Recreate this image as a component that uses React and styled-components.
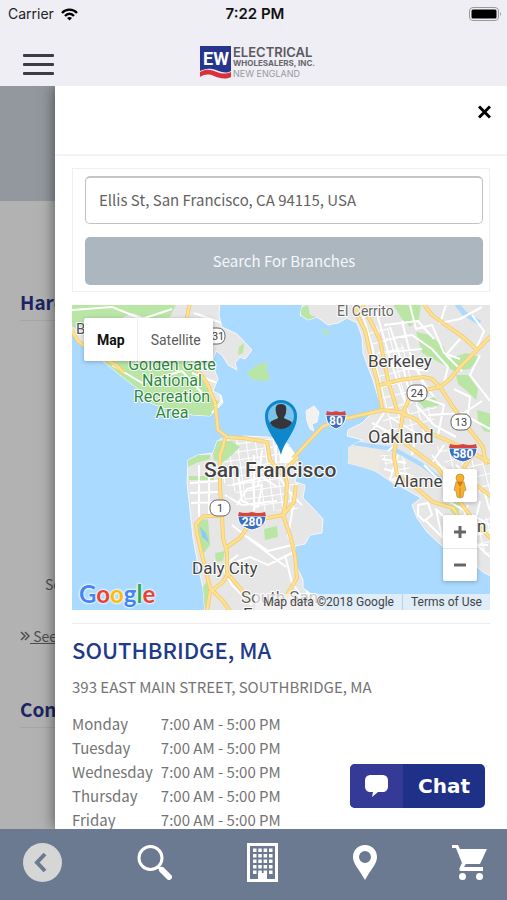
import styled, { createGlobalStyle } from 'styled-components';

const GlobalStyle = createGlobalStyle`
  *, *::before, *::after {
    box-sizing: border-box;
  }

  body {
    margin: 0;
    font-family: 'Noto Sans CJK SC', 'Open Sans', sans-serif;
    font-size: 15px;
    line-height: 24px;
    color: #747474;
  }

  h2, p {
    margin: 0;
  }

  button {
    border: 0;
    padding: 0;
    background: none;
    font: inherit;
    color: inherit;
    cursor: pointer;
  }

  svg {
    display: block;
  }
`;

const Screen = styled.div`
  display: flex;
  flex-direction: column;
  height: 100vh;
  background-color: #efeef4;
`;

const StatusBar = styled.div`
  display: grid;
  grid-template-columns: 1fr auto 1fr;
  align-items: center;
  height: 28px;
  padding: 0 5px 0 8px;
  font-family: Inter, sans-serif;
  font-size: 14px;
  color: #222;
`;

const Carrier = styled.div`
  display: flex;
  align-items: center;
  gap: 7px;
`;

const Time = styled.strong`
  font-size: 15px;
  font-weight: 600;
  color: #111;
`;

const Battery = styled.div`
  justify-self: end;
`;

const TopBar = styled.header`
  display: grid;
  grid-template-columns: 1fr auto 1fr;
  align-items: center;
  height: 58px;
  padding: 0 15px 0 23px;
`;

const MenuButton = styled.button`
  display: flex;
  flex-direction: column;
  gap: 6px;
  width: 31px;
  margin-top: 14px;

  span {
    height: 3px;
    width: 100%;
    border-radius: 1px;
    background-color: #3d3b43;
  }
`;

const Logo = styled.a`
  display: flex;
  gap: 2px;
  margin-top: 10px;
  text-decoration: none;
`;

const LogoWords = styled.div`
  display: flex;
  flex-direction: column;
  font-family: Inter, sans-serif;
  white-space: nowrap;
`;

const LogoLine = styled.span`
  font-size: ${(props) => props.$size}px;
  font-weight: ${(props) => props.$weight};
  line-height: ${(props) => props.$line}px;
  color: ${(props) => props.$color};
`;

const Main = styled.main`
  position: relative;
  flex: 1;
  min-height: 0;
  overflow: hidden;
  background-color: #b2b2b2;
`;

const Hero = styled.div`
  height: 115px;
  background-color: #93989e;
`;

const Underlay = styled.div`
  display: flex;
  flex-direction: column;
  padding: 87px 20px 0;
  color: #4e4e52;
`;

const UnderlayHeading = styled.h2`
  padding-bottom: 4px;
  border-bottom: 1px solid #a6a6a6;
  font-size: 19px;
  font-weight: 700;
  line-height: 28px;
  color: #1c2562;
`;

const UnderlayText = styled.p`
  padding: 251px 0 28px 25px;
  font-size: 14px;
`;

const UnderlayLink = styled.a`
  display: flex;
  align-items: center;
  margin-bottom: 47px;
  font-size: 14px;
  color: inherit;
`;

const Drawer = styled.aside`
  position: absolute;
  top: 0;
  right: 0;
  bottom: 0;
  left: 55px;
  overflow: hidden;
  background-color: #fff;
  box-shadow: 0 0 14px rgba(0, 0, 0, 0.55);
`;

const DrawerHeader = styled.div`
  display: flex;
  justify-content: flex-end;
  align-items: flex-start;
  height: 70px;
  padding: 19px 16px;
  border-bottom: 2px solid #f3f3f3;
`;

const DrawerBody = styled.div`
  padding: 12px 17px 0;
`;

const SearchForm = styled.form`
  display: flex;
  flex-direction: column;
  gap: 13px;
  padding: 7px 6px 6px 12px;
  margin-bottom: 13px;
  border: 1px solid #efefef;
`;

const AddressInput = styled.input`
  height: 48px;
  width: 100%;
  padding: 0 13px 2px;
  border: 1px solid #c2c2c2;
  border-top: 2px solid #c6c6c6;
  border-radius: 5px;
  background-color: #fff;
  font: inherit;
  color: #636363;
`;

const SearchButton = styled.button`
  height: 48px;
  border-radius: 5px;
  background-color: #abb6bf;
  color: #f5f7fb;
`;

const MapFrame = styled.section`
  position: relative;
  height: 305px;
  overflow: hidden;
  background-color: #aadaff;
  font-family: Roboto, sans-serif;

  > svg {
    width: 100%;
    height: 100%;
  }
`;

const MapTypes = styled.div`
  position: absolute;
  top: 13px;
  left: 12px;
  display: flex;
  height: 43px;
  border-radius: 2px;
  background-color: #fff;
  box-shadow: 0 1px 4px rgba(0, 0, 0, 0.25);
`;

const MapType = styled.button`
  padding: 0 12px 0 13px;
  font-size: 14px;
  font-weight: ${(props) => (props.$active ? 700 : 400)};
  color: ${(props) => (props.$active ? '#111' : '#5c5c5c')};

  & + & {
    border-left: 1px solid #eee;
  }
`;

const MapControls = styled.div`
  position: absolute;
  right: 13px;
  bottom: 29px;
  display: flex;
  flex-direction: column;
  gap: 13px;
`;

const ControlGroup = styled.div`
  display: flex;
  flex-direction: column;
  width: 34px;
  border-radius: 2px;
  background-color: #fff;
  box-shadow: 0 1px 4px rgba(0, 0, 0, 0.25);
`;

const ControlButton = styled.button`
  display: flex;
  align-items: center;
  justify-content: center;
  height: 33px;

  & + & {
    border-top: 1px solid #e8e8e8;
  }
`;

const Google = styled.a`
  position: absolute;
  left: 7px;
  bottom: 2px;
  font-family: Lato, sans-serif;
  font-size: 24px;
  font-weight: 700;
  line-height: 28px;
  text-decoration: none;
  text-shadow: 0 0 2px #fff, 0 0 2px #fff, 0 0 3px #fff;
`;

const Letter = styled.span`
  color: ${(props) => props.$color};
`;

const Attribution = styled.div`
  position: absolute;
  right: 0;
  bottom: 0;
  display: flex;
  font-size: 12px;
  line-height: 16px;
  color: #444;
  background-color: rgba(245, 245, 245, 0.7);

  > * {
    padding: 0 8px;
    color: inherit;
    text-decoration: none;
  }

  > * + * {
    border-left: 1px solid #b9d3e6;
  }
`;

const Branch = styled.section`
  margin-top: 13px;
  padding-top: 11px;
  border-top: 1px solid #ececec;
`;

const BranchName = styled.h2`
  font-size: 22px;
  font-weight: 500;
  line-height: 28px;
  color: #213a8a;
`;

const Address = styled.p`
  margin: 12px 0 13px;
`;

const Hours = styled.table`
  border-collapse: collapse;

  th, td {
    height: 24px;
    padding: 0 8px 0 0;
    font-weight: 400;
    text-align: left;
    white-space: nowrap;
  }
`;

const ChatButton = styled.button`
  position: absolute;
  right: 22px;
  bottom: 21px;
  display: flex;
  align-items: stretch;
  height: 44px;
  border-radius: 5px;
  overflow: hidden;
  background-color: #1f3088;
  color: #fff;
  font-family: 'DejaVu Sans', Verdana, sans-serif;
  font-size: 20px;
  font-weight: 700;
`;

const ChatIcon = styled.span`
  display: flex;
  align-items: center;
  padding: 0 14px;
  background-color: #353a96;
`;

const ChatLabel = styled.span`
  display: flex;
  align-items: center;
  padding: 0 15px;
`;

const BottomNav = styled.nav`
  display: flex;
  justify-content: space-between;
  align-items: center;
  height: 71px;
  padding: 0 20px 4px 23px;
  background-color: #6b7a91;
  color: #fff;
`;

const schedule = [
  ['Monday', '7:00 AM - 5:00 PM'],
  ['Tuesday', '7:00 AM - 5:00 PM'],
  ['Wednesday', '7:00 AM - 5:00 PM'],
  ['Thursday', '7:00 AM - 5:00 PM'],
  ['Friday', '7:00 AM - 5:00 PM'],
];

const googleLetters = [
  ['G', '#4285f4'],
  ['o', '#ea4335'],
  ['o', '#fbbc05'],
  ['g', '#4285f4'],
  ['l', '#34a853'],
  ['e', '#ea4335'],
];

// Coastlines
const marin =
  'M-2 -2H148L147 10L150 22L165 29L180 45L173 54L168 52L163 58L165 65L156 60L150 50L144 46L140 58L146 74L141 86L149 90L151 98L138 111L121 110L101 106L78 98L65 83L48 70L31 56L10 38L1 26L-2 24Z';
const sanFrancisco =
  'M116 155L126 150L141 148L145 136L151 133L160 134L171 131L195 132L205 134L216 139L225 152L226 165L223 177L233 180L231 193L240 202L251 214L250 228L238 230L233 239L223 241L224 260L231 275L231 283L238 288L251 294V307H133L131 283L126 260L121 233L115 177Z';
const eastBay =
  'M231 -2L228 10L236 15L245 12L256 20L266 18L275 13L285 18L290 32L291 48L296 62L301 75L306 92L310 103L298 110L290 118L276 125L275 131L291 135L280 140L276 158L295 163L305 167L321 178L335 185L349 193L340 200L345 213L355 227L371 242L405 262L411 267L420 272V-2Z';

const parks = [
  'M-2 -2H105L98 12L78 14L60 8L40 18L20 20L8 26L-2 20Z',
  'M31 56L48 70L65 83L78 98L101 106L121 110L138 111L150 98L140 93L132 78L125 62L118 50H40Z',
  'M176 67L185 60L194 57L195 66L198 75L188 76L178 73Z',
  'M141 148L145 136L160 136L168 142L160 150L150 158L142 155Z',
  'M116 155L126 150L138 150L138 154L124 158L116 162Z',
  'M117 171H142V175H117Z',
  'M124 216L136 214L138 240L132 248L126 238Z',
  'M130 283L136 275L139 290L135 304H132Z',
  'M192 224L205 221L206 232L193 235Z',
  'M143 248L153 246L151 256L144 257Z',
  'M320 -2H349L347 14L338 22L330 14Z',
  'M344 27L358 30L372 42L376 54L394 48L407 52L398 64L382 66L368 58L350 48Z',
  'M384 70L396 70L406 84L404 95L395 86L386 79Z',
  'M405 105L420 109V128L412 126L406 116Z',
  'M228 3L236 0L238 10L245 12L236 15L229 10Z',
  'M283 52L289 55L291 61L286 60Z',
  'M346 96L362 92L368 100L352 103Z',
  'M380 198L388 197L386 212L378 206Z',
];

const islandParks = [
  'M176 67L185 60L194 57L195 66L198 75L188 76L178 73Z',
  'M251 24L256 26L257 31L252 28Z',
  'M167 42L172 38L171 48L166 50Z',
];

const minorRoads = [
  'M0 5L40 2L70 14L100 4',
  'M118 30L138 14M122 8L150 18',
  'M40 60L70 78L110 66L130 88',
  'M120 68L145 78L150 96L140 108',
  'M118 178L146 176M118 188L146 187M119 198L142 197M127 160V212M137 160V212',
  'M160 180L190 172L205 182M165 160L170 196L186 202L190 180L175 184L165 200',
  'M153 190L170 200L205 196M176 232L196 246L220 240M160 220L180 236L214 262',
  'M150 262L178 252L196 260L220 248M166 250L150 262L160 280L180 300',
  'M182 150V206M190 145L186 180M204 140V168L220 190L230 200',
  'M225 180L216 230L230 268L236 290M213 250L220 278L238 302',
  'M290 8L300 40L308 88M304 6L320 60L334 100M312 20L346 16L362 34',
  'M314 34L340 30L360 44L376 62L372 78M306 48L350 44M310 60L356 66',
  'M318 22L330 58L338 90M330 16L340 56L352 78L362 92',
  'M338 0L344 24L360 20L372 48L388 54M374 0L368 18L388 14L410 2',
  'M388 34L374 50L390 66M408 50L398 70L418 96M400 10L412 26L404 44',
  'M318 112L344 128L340 150M300 118L330 134L316 146M312 108L300 126',
  'M350 92L372 100L366 130M356 110L392 108L410 96M344 100L362 120L384 132',
  'M382 84L398 92L396 112L418 124M372 140L360 158L388 170',
  'M310 154L334 158M312 164L338 170M326 150L318 174L346 184',
  'M352 160L370 178L394 190M360 150L380 176L376 196L418 220M384 160L412 186L418 206',
  'M346 200L356 198L360 210L352 216L346 210ZM354 216L370 232L364 204L378 218',
  'M396 200L388 224L418 252M408 196L400 230L418 228M392 240L416 240',
];

const highways = [
  'M0 26L6 36L22 48L44 60L52 68M118 -2L115 12L120 40L126 66L135 78L143 98L146 125L155 132L171 133L195 137L198 155L211 170',
  'M153 133L151 142L148 150V183L150 210L151 233L155 247V270L151 277L138 287L135 306',
  'M150 211L132 211L124 219L125 228L130 250L138 283L151 296L158 306',
  'M211 210L195 213L182 214L175 223L168 233L155 242M155 268L168 283L178 298',
  'M226 152L212 166L215 178L214 196L211 210M224 180L222 197L211 210L218 230L223 250L225 273L215 290L196 300',
  'M221 153L250 122L263 116L311 105L328 107L345 115L358 128L381 138L408 152L420 158',
  'M283 -2L286 12L293 25L298 48L305 75L310 103M290 0L298 15L308 35L316 75L325 105',
  'M308 80L328 75L351 72L360 74L368 82L378 74L388 62L405 45L420 30',
  'M368 82L381 102L398 125L411 142L414 160M351 -2L360 10L371 18L391 32L405 45M348 86L368 82',
  'M338 92L331 108L328 128L323 142L322 152L325 170L341 180L361 197L381 203L392 220',
  'M325 132L351 152L366 163L388 197L408 223L420 234M401 150L392 162L404 180L420 192',
];

const placeLabels = [
  { text: 'Bol', x: 4, y: 29, size: 15, color: '#555' },
  { text: 'El Cerrito', x: 265, y: 11, size: 14, color: '#666' },
  { text: 'Berkeley', x: 296, y: 62, size: 17 },
  { text: 'Oakland', x: 296, y: 138, size: 18 },
  { text: 'Alame', x: 322, y: 182, size: 17 },
  { text: 'n', x: 405, y: 227, size: 17 },
  { text: 'San Francisco', x: 132, y: 172, size: 21, weight: 500 },
  { text: 'Daly City', x: 120, y: 269, size: 17 },
  { text: 'South San', x: 169, y: 298, size: 17, color: '#666' },
  { text: 'F', x: 171, y: 315, size: 17 },
];

const parkLabel = ['Golden Gate', 'National', 'Recreation', 'Area'];

function RouteBadge({ x, y, children }) {
  return (
    <g>
      <rect x={x - 10} y={y - 8} width="20" height="16" rx="7" fill="#fff" stroke="#666" />
      <text x={x} y={y + 4} textAnchor="middle" fontSize="11" fill="#444">
        {children}
      </text>
    </g>
  );
}

function InterstateBadge({ x, y, width, children }) {
  const half = width / 2;
  return (
    <g transform={`translate(${x} ${y})`}>
      <path
        d={`M${-half} -4H${half}C${half} 4 ${half - 5} 8 0 10C${5 - half} 8 ${-half} 4 ${-half} -4Z`}
        fill="#3c6fc0"
        stroke="#fff"
      />
      <path
        d={`M${1 - half} -8Q${-half / 2} -6 0 -8Q${half / 2} -6 ${half - 1} -8L${half} -4H${-half}Z`}
        fill="#d8453e"
      />
      <text y="6" textAnchor="middle" fontSize="12" fontWeight="700" fill="#fff">
        {children}
      </text>
    </g>
  );
}

function MapArt() {
  return (
    <svg viewBox="0 0 418 305" preserveAspectRatio="xMidYMid slice" role="img" aria-label="Map">
      <defs>
        <clipPath id="land">
          <path d={`${marin}${sanFrancisco}${eastBay}`} />
        </clipPath>
        <clipPath id="city">
          <path d="M150 134H216L226 165V205L186 206L150 176Z" />
        </clipPath>
        <pattern id="streets" width="9" height="8" patternUnits="userSpaceOnUse" patternTransform="rotate(-8)">
          <path d="M0 0H9M0 0V8" stroke="#fff" strokeWidth="2" />
        </pattern>
        <pattern id="blocks" width="10" height="11" patternUnits="userSpaceOnUse" patternTransform="rotate(-14)">
          <path d="M0 0H10M0 0V11" stroke="#fff" strokeWidth="2" />
        </pattern>
      </defs>

      <g fill="#e6e6e6" stroke="#f7f7f7">
        <path d={marin} />
        <path d={sanFrancisco} />
        <path d={eastBay} />
        <path d="M234 106L242 101L247 107L245 117L240 119L242 126L238 124L235 116Z" fill="#f3f1ee" />
      </g>
      <path d="M276 142L291 138L312 148L305 167L276 158Z" fill="#ece8e2" />
      <g clipPath="url(#land)">
        <path d="M296 20L320 24L350 70L366 106L350 140L312 136L310 100Z" fill="url(#blocks)" />
        <path d="M362 140L418 160V190L390 184ZM398 215L418 212V252L404 244Z" fill="url(#blocks)" />
        <path d="M308 150L330 150L348 182L322 176Z" fill="url(#streets)" />
        <g clipPath="url(#city)">
          <path d="M150 134H226V206H150Z" fill="url(#streets)" />
        </g>
        {parks.map((d) => (
          <path key={d} d={d} fill="#b9e6a5" />
        ))}
        <path d="M206 136L222 145L225 158L208 158Z" fill="#fff" />
        <path d="M128 222L134 228L137 238L130 232Z" fill="#8fc9f5" />
        <path d="M275 137L300 141L322 144L350 160L376 180L398 194" fill="none" stroke="#aadaff" strokeWidth="4" />
        <path d="M384 -2L392 8L408 18" fill="none" stroke="#aadaff" strokeWidth="5" />
        <path d={minorRoads.join('')} fill="none" stroke="#fff" strokeWidth="2" strokeLinejoin="round" />
      </g>
      <path d={islandParks.join('')} fill="#b9e6a5" />
      <path d={highways.join('')} fill="none" stroke="#f2cb67" strokeWidth="4" strokeLinejoin="round" />
      <path d={highways.join('')} fill="none" stroke="#fde093" strokeWidth="2.500" strokeLinejoin="round" />

      <RouteBadge x={143} y={31}>
        131
      </RouteBadge>
      <RouteBadge x={345} y={88}>
        24
      </RouteBadge>
      <RouteBadge x={389} y={117}>
        13
      </RouteBadge>
      <RouteBadge x={148} y={203}>
        1
      </RouteBadge>
      <InterstateBadge x={264} y={114} width={20}>
        80
      </InterstateBadge>
      <InterstateBadge x={391} y={147} width={28}>
        580
      </InterstateBadge>
      <InterstateBadge x={180} y={215} width={28}>
        280
      </InterstateBadge>

      <g stroke="#fff" strokeWidth="2" strokeLinejoin="round" paintOrder="stroke">
        {parkLabel.map((line, i) => (
          <text key={line} x="100" y={65 + i * 16} textAnchor="middle" fontSize="16" fill="#2c8a3c">
            {line}
          </text>
        ))}
        {placeLabels.map((label) => (
          <text
            key={label.text}
            x={label.x}
            y={label.y}
            fontSize={label.size}
            fontWeight={label.weight || 400}
            fill={label.color || '#444'}
          >
            {label.text}
          </text>
        ))}
      </g>

      <path d="M209 150C206 136 193 126 193 111A16 16 0 0 1 225 111C225 126 212 136 209 150Z" fill="#0e87cb" />
      <circle cx="209" cy="111" r="13" fill="#7cc3ea" />
      <path
        d="M209 99C204 99 203 102 204 107C204 110 206 111 206 113C203 115 199 115 198 118A13 13 0 0 0 220 118C219 115 215 115 212 113C212 111 214 110 214 107C215 102 214 99 209 99Z"
        fill="#35353b"
      />
    </svg>
  );
}

function BranchMap() {
  return (
    <MapFrame>
      <MapArt />
      <MapTypes>
        <MapType type="button" $active>
          Map
        </MapType>
        <MapType type="button">Satellite</MapType>
      </MapTypes>
      <Google href="#google" aria-label="Google">
        {googleLetters.map(([letter, color], i) => (
          <Letter key={i} $color={color}>
            {letter}
          </Letter>
        ))}
      </Google>
      <Attribution>
        <span>Map data ©2018 Google</span>
        <a href="#terms">Terms of Use</a>
      </Attribution>
      <MapControls>
        <ControlGroup>
          <ControlButton type="button" aria-label="Street view">
            <svg width="16" height="26" viewBox="0 0 16 26">
              <path
                d="M4 9Q8 7 12 9L14 17L12 18L11 24Q8 26 5 24L4 18L2 17Z"
                fill="#f5b02e"
                stroke="#b98b4a"
                strokeWidth="0.7"
              />
              <path d="M5 9L8 14L11 9Z" fill="#e2711d" />
              <path d="M8 15V24" stroke="#c98a22" />
              <circle cx="8" cy="5" r="4" fill="#f5b02e" stroke="#c98a22" strokeWidth="0.7" />
            </svg>
          </ControlButton>
        </ControlGroup>
        <ControlGroup>
          <ControlButton type="button" aria-label="Zoom in">
            <svg width="14" height="14" viewBox="0 0 14 14" stroke="#666" strokeWidth="3">
              <path d="M1 7H13M7 1V13" />
            </svg>
          </ControlButton>
          <ControlButton type="button" aria-label="Zoom out">
            <svg width="14" height="14" viewBox="0 0 14 14" stroke="#666" strokeWidth="3">
              <path d="M1 7H13" />
            </svg>
          </ControlButton>
        </ControlGroup>
      </MapControls>
    </MapFrame>
  );
}

function Header() {
  return (
    <TopBar>
      <MenuButton type="button" aria-label="Menu">
        <span />
        <span />
        <span />
      </MenuButton>
      <Logo href="#home">
        <svg width="31" height="33" viewBox="0 0 31 33">
          <path d="M0 0H31V25C24 29 18 24 12 23C7 22 3 24 0 25Z" fill="#27358c" />
          <path d="M0 26C7 22 12 24 17 26C22 28 26 28 31 26V31C25 34 19 32 14 30C9 28 5 28 0 31Z" fill="#d9303c" />
          <text x="16" y="19" textAnchor="middle" fontFamily="Roboto" fontSize="18" fontWeight="700" fill="#fff">
            EW
          </text>
        </svg>
        <LogoWords>
          <LogoLine $size={13} $weight={600} $line={12} $color="#5a5a5e">
            ELECTRICAL
          </LogoLine>
          <LogoLine $size={8} $weight={700} $line={10} $color="#66666a">
            WHOLESALERS, INC.
          </LogoLine>
          <LogoLine $size={9} $weight={400} $line={11} $color="#9a9a9e">
            NEW ENGLAND
          </LogoLine>
        </LogoWords>
      </Logo>
    </TopBar>
  );
}

function Footer() {
  return (
    <BottomNav>
      <button type="button" aria-label="Back">
        <svg width="39" height="39" viewBox="0 0 39 39">
          <circle cx="19.5" cy="19.5" r="19.5" fill="#d6d6d6" />
          <path d="M22 11L14 19.500L22 28" fill="none" stroke="#6b7a91" strokeWidth="4" />
        </svg>
      </button>
      <button type="button" aria-label="Search">
        <svg width="35" height="35" viewBox="0 0 35 35" fill="none" stroke="#fff">
          <circle cx="13.500" cy="13" r="11.500" strokeWidth="3" />
          <path d="M21.500 22L25 25.500" strokeWidth="3" />
          <path d="M25 25L32 32" strokeWidth="6" strokeLinecap="round" />
        </svg>
      </button>
      <button type="button" aria-label="Company">
        <svg width="31" height="39" viewBox="0 0 31 39">
          <rect x="1.500" y="1.500" width="28" height="36" fill="none" stroke="#fff" strokeWidth="3" />
          {[5.5, 11, 16.5, 22, 27.5].map((y) =>
            [6, 11.3, 16.6, 22].map((x) => <rect key={`${x}-${y}`} x={x} y={y} width="3.500" height="3.500" fill="#fff" />)
          )}
          <path d="M11 37V30H20V37Z" fill="#fff" />
        </svg>
      </button>
      <button type="button" aria-label="Branches">
        <svg width="24" height="35" viewBox="0 0 24 35">
          <path
            d="M12 0C5 0 0 5 0 12C0 19 6 24 12 35C18 24 24 19 24 12C24 5 19 0 12 0ZM12 6A6 6 0 1 1 12 18A6 6 0 0 1 12 6Z"
            fill="#fff"
            fillRule="evenodd"
          />
        </svg>
      </button>
      <button type="button" aria-label="Cart">
        <svg width="35" height="35" viewBox="0 0 35 35" fill="#fff">
          <path d="M0 0H6L8 4H35L28 19H14L12 22H31V26H9C7 26 7 24 8 22L10 18L4 3H0Z" />
          <circle cx="10.500" cy="31.500" r="3.500" />
          <circle cx="27.500" cy="31.500" r="3.500" />
        </svg>
      </button>
    </BottomNav>
  );
}

export default function App() {
  return (
    <>
      <GlobalStyle />
      <Screen>
        <StatusBar>
          <Carrier>
            Carrier
            <svg width="17" height="13" viewBox="0 0 17 13" fill="none" stroke="#000" strokeWidth="2.300">
              <path d="M1 5C5 0.500 12 0.500 16 5" />
              <path d="M4 8C6.500 5 10.500 5 13 8" />
              <path d="M6 10C7.500 8.500 9.500 8.500 11 10L8.500 12.500Z" fill="#000" stroke="none" />
            </svg>
          </Carrier>
          <Time>7:22 PM</Time>
          <Battery>
            <svg width="33" height="14" viewBox="0 0 33 14">
              <rect x="0.500" y="0.500" width="29" height="13" rx="3.500" fill="none" stroke="#9a9a9a" />
              <rect x="2.500" y="2.500" width="25" height="9" rx="1.500" />
              <path d="M31 5Q33 7 31 9Z" fill="#9a9a9a" />
            </svg>
          </Battery>
        </StatusBar>
        <Header />
        <Main>
          <Hero />
          <Underlay>
            <UnderlayHeading>Hard</UnderlayHeading>
            <UnderlayText>Se</UnderlayText>
            <UnderlayLink href="#see">
              <svg width="10" height="10" viewBox="0 0 10 10" fill="none" stroke="#4e4e52" strokeWidth="1.500">
                <path d="M1 1L5 5L1 9M5 1L9 5L5 9" />
              </svg>
              <span>&nbsp;See</span>
            </UnderlayLink>
            <UnderlayHeading>Con</UnderlayHeading>
          </Underlay>

          <Drawer>
            <DrawerHeader>
              <button type="button" aria-label="Close">
                <svg width="13" height="14" viewBox="0 0 13 14" stroke="#000" strokeWidth="3">
                  <path d="M1 1.500L12 12.500M12 1.500L1 12.500" />
                </svg>
              </button>
            </DrawerHeader>
            <DrawerBody>
              <SearchForm onSubmit={(e) => e.preventDefault()}>
                <AddressInput aria-label="Address" defaultValue="Ellis St, San Francisco, CA 94115, USA" />
                <SearchButton type="submit">Search For Branches</SearchButton>
              </SearchForm>
              <BranchMap />
              <Branch>
                <BranchName>SOUTHBRIDGE, MA</BranchName>
                <Address>393 EAST MAIN STREET, SOUTHBRIDGE, MA</Address>
                <Hours>
                  <tbody>
                    {schedule.map(([day, hours]) => (
                      <tr key={day}>
                        <th scope="row">{day}</th>
                        <td>{hours}</td>
                      </tr>
                    ))}
                  </tbody>
                </Hours>
              </Branch>
            </DrawerBody>
          </Drawer>

          <ChatButton type="button">
            <ChatIcon>
              <svg width="25" height="24" viewBox="0 0 25 24" fill="#fff">
                <path d="M7 1H18C22 1 24 3 24 7V12C24 16 22 18 18 18H14L8 23L9 18H7C3 18 1 16 1 12V7C1 3 3 1 7 1Z" />
              </svg>
            </ChatIcon>
            <ChatLabel>Chat</ChatLabel>
          </ChatButton>
        </Main>
        <Footer />
      </Screen>
    </>
  );
}
